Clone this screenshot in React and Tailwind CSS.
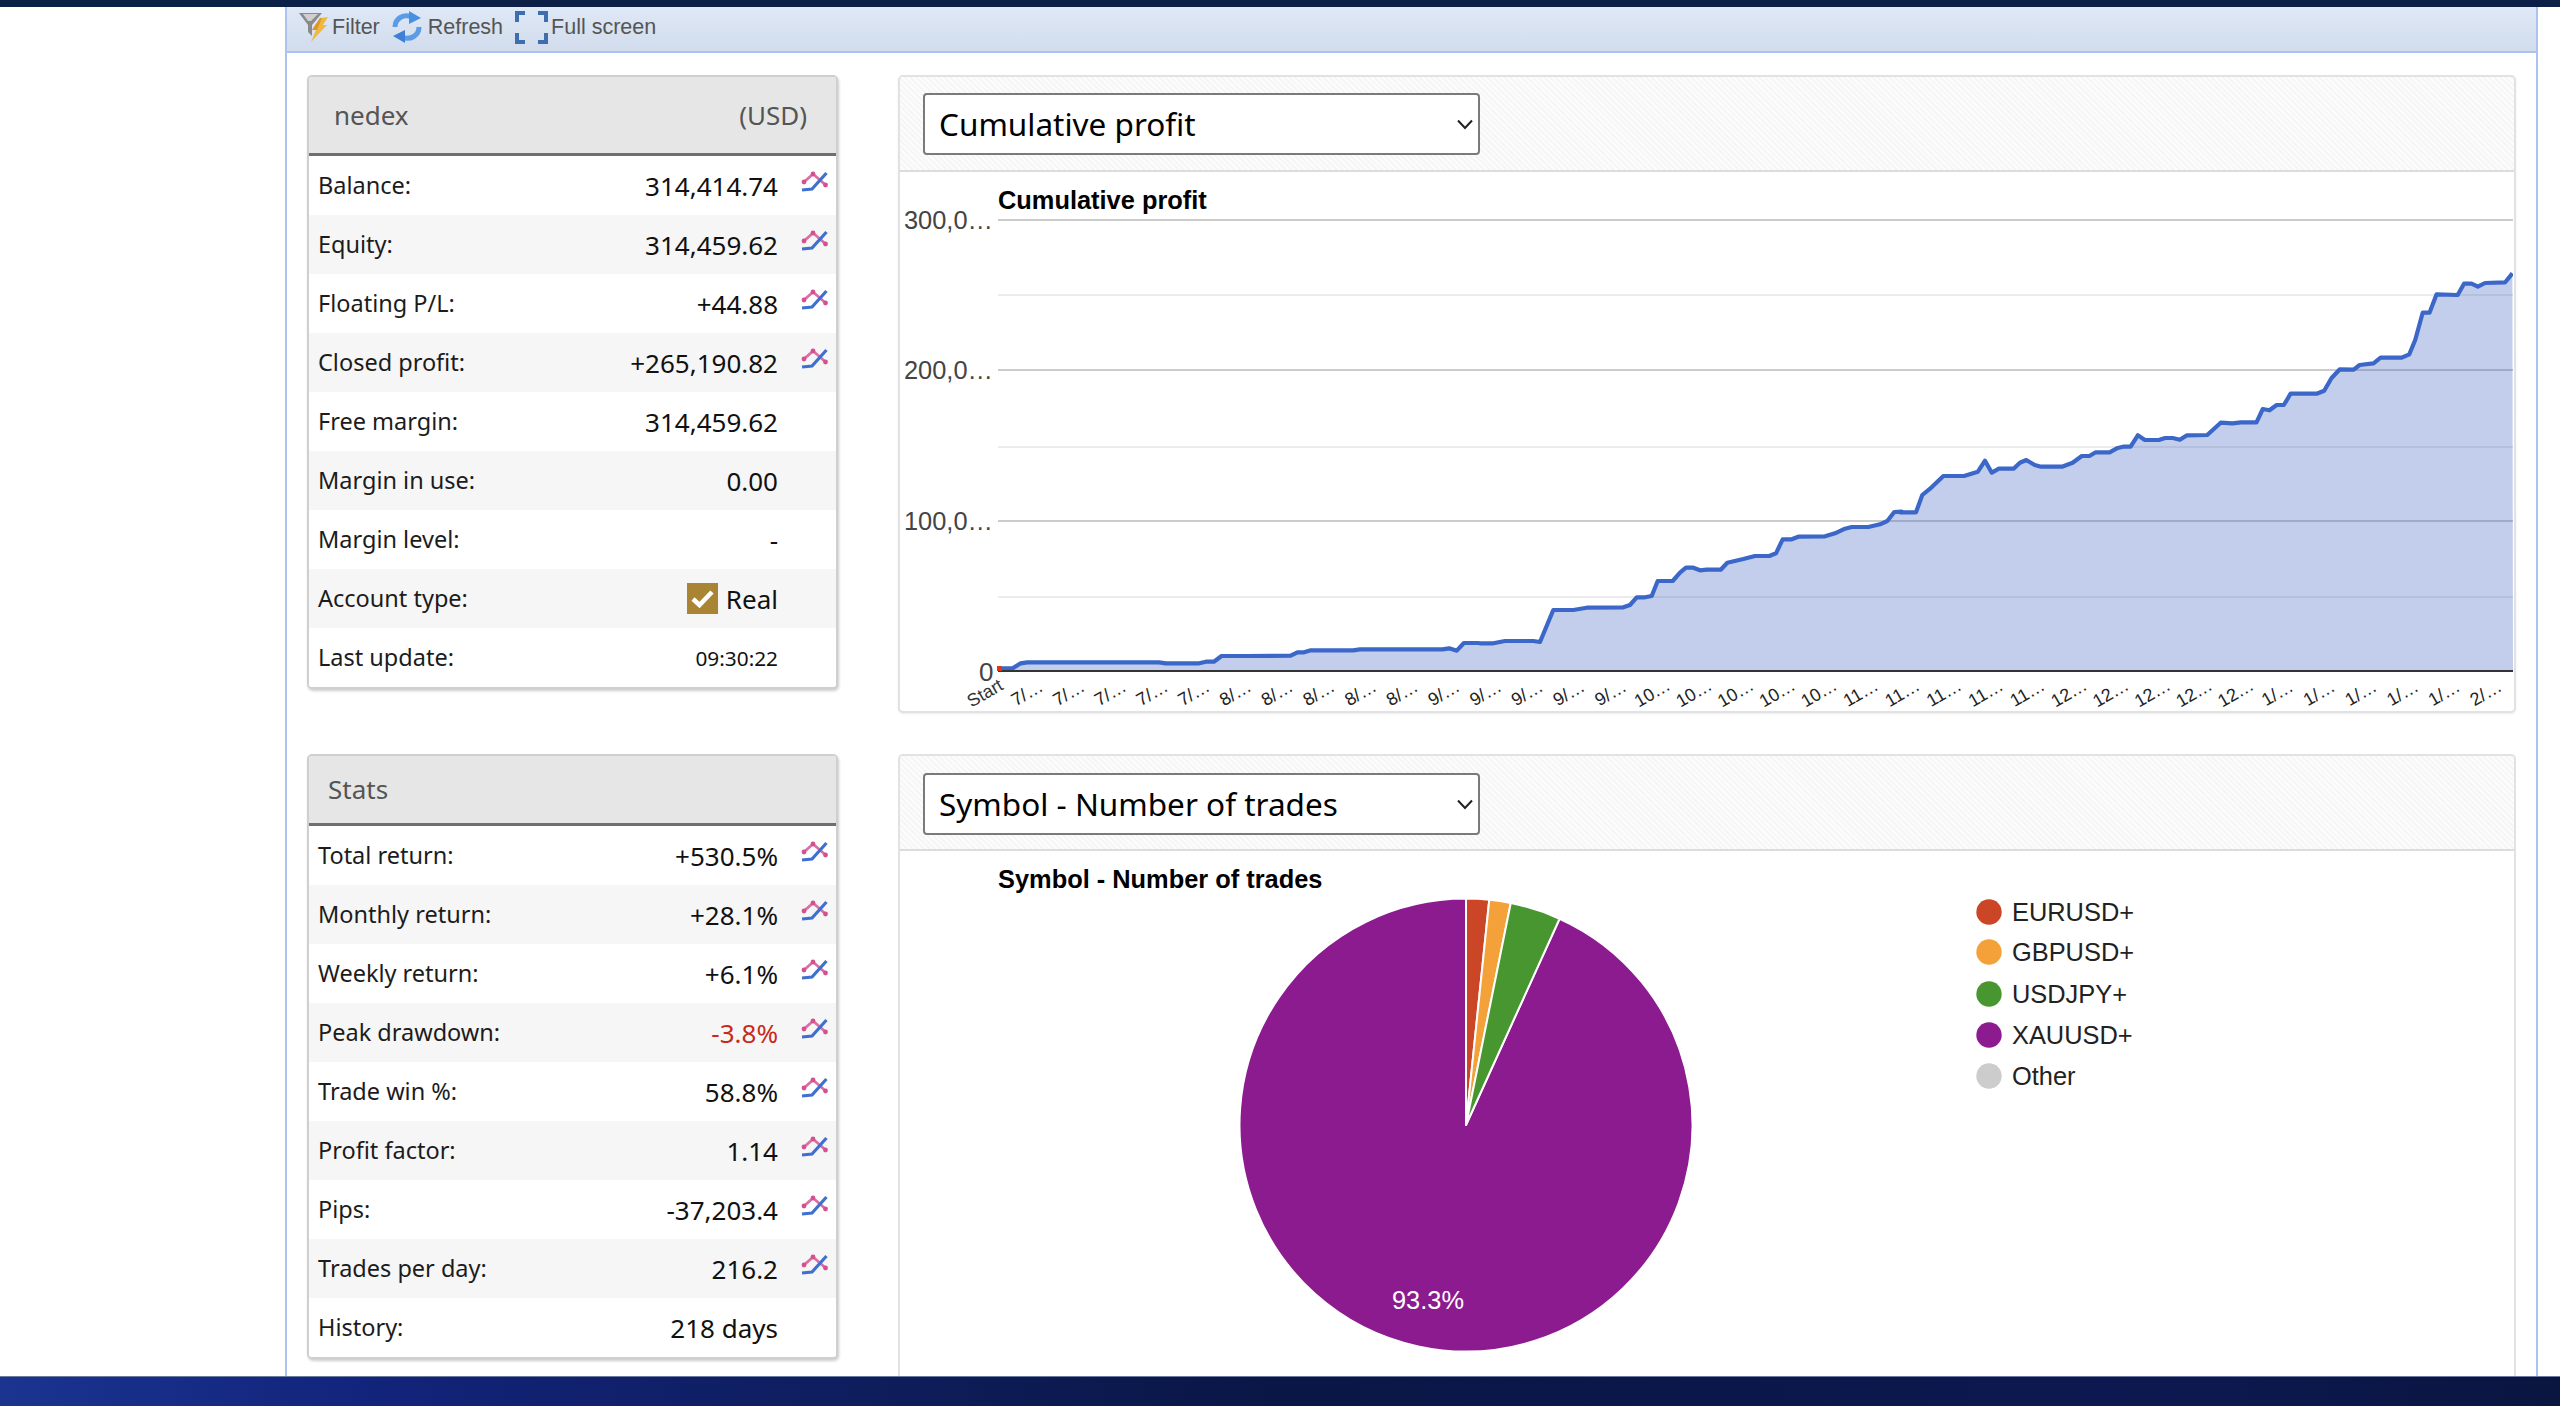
const seg1 = [[272,508],[275,505],[297,505],[315,490],[330,487],[510,487],[625,487],[640,490],[715,490],[730,485],[748,485],[765,468],[820,468],[920,467],[935,457],[950,457],[965,451],[1060,451],[1075,448],[1260,448],[1275,445],[1292,452],[1308,429],[1340,429]].map(([x,y])=>[880+x/2.24,500+y/3]);
const seg2 = [[0,670],[40,670],[75,663],[160,663],[180,666],[220,570],[280,570],[320,563],[430,562],[450,555],[470,532],[495,532],[515,528],[533,483],[578,483],[600,458],[618,443],[640,443],[660,451],[680,449],[722,449],[742,428],[790,417],[825,408],[868,408],[888,400],[908,358],[935,358],[955,350],[1035,349],[1065,340],[1095,326],[1115,321],[1165,321],[1200,313],[1222,303],[1243,276],[1265,275]].map(([x,y])=>[1480+x/3,420+y/3]);
const seg3 = [[0,817],[38,817],[53,765],[75,742],[103,708],[152,708],[185,695],[202,662],[218,698],[235,686],[270,686],[285,668],[300,660],[320,675],[335,680],[385,680],[410,668],[432,648],[450,648],[465,637],[498,637],[515,625],[530,620],[548,620],[565,586],[582,600],[615,600],[630,594],[648,594],[665,599],[682,586],[730,585],[762,548],[790,550],[810,547],[847,547],[862,507],[878,511],[895,495],[912,495],[928,461],[990,461],[1008,452],[1025,415],[1045,388],[1078,389],[1092,375],[1125,370],[1142,353],[1192,353],[1210,343],[1224,300],[1242,218],[1258,218],[1275,163],[1325,165],[1340,131],[1358,131],[1373,140],[1390,129],[1438,127],[1455,100]].map(([x,y])=>[1900+x/2.376,240+y/3]);
const line = [...seg1,...seg2,...seg3].map(([x,y])=>`${x.toFixed(1)},${y.toFixed(1)}`).join(" ");
const lastX = 2513;
const area = `${line} ${lastX},671 1001,671`;

const xLabels = [
  ...Array(5).fill("7/…"),...Array(5).fill("8/…"),...Array(5).fill("9/…"),...Array(5).fill("10…"),...Array(5).fill("11…"),...Array(5).fill("12…"),...Array(5).fill("1/…"),"2/…"];

const CX = 1466, CY = 1125, R = 226.5;
function polar(a){const t=a*Math.PI/180;return [CX+R*Math.sin(t),CY-R*Math.cos(t)];}
function slice(a,b){const [x1,y1]=polar(a);const [x2,y2]=polar(b);const large=b-a>180?1:0;return `M${CX} ${CY}L${x1} ${y1}A${R} ${R} 0 ${large} 1 ${x2} ${y2}Z`;}

function TrendIcon(){
  return (
    <svg width="27" height="21" viewBox="0 0 27 21" className="-translate-y-[4px] shrink-0" fill="none">
      <polyline points="3,11 12,3 19,9 24.5,14" stroke="#dd6ea3" strokeWidth="2.8"/>
      <circle cx="3" cy="11" r="2.4" fill="#d4508e"/>
      <circle cx="12" cy="3" r="2.4" fill="#d4508e"/>
      <circle cx="24.5" cy="14" r="2.4" fill="#d4508e"/>
      <polyline points="1,19 11,18 25.5,2" stroke="#3f6fd0" strokeWidth="3.2"/>
    </svg>
  );
}

function Row({label,value,alt,icon,valueClass="text-[26px]",children}){
  return (
    <div className={`flex h-[59px] items-center pl-[9px] pr-[8px] ${alt?"bg-[#f6f6f6]":"bg-white"}`}>
      <div className="flex-1 text-[23.5px] text-[#1c1c1c]">{label}</div>
      {children}
      <div className={`translate-y-[1px] ${valueClass}`}>{value}</div>
      <div className="ml-[23px] w-[27px] shrink-0">{icon && <TrendIcon/>}</div>
    </div>
  );
}

function Card({header,right,headerH,pl,rows}){
  return (
    <div className="overflow-hidden rounded-[5px] border-2 border-[#cfcfcf] bg-white shadow-[1px_2px_3px_rgba(0,0,0,0.2)]">
      <div className={`flex items-center justify-between border-b-[3px] border-[#6f6f6f] bg-[#e6e6e6] pr-[29px] text-[26px] text-[#555555] ${headerH} ${pl}`}>
        <span>{header}</span>
        {right && <span>{right}</span>}
      </div>
      {rows}
    </div>
  );
}

function SelectBox({value}){
  return (
    <div className="relative h-[62px] w-[557px]">
      <select defaultValue={value} className="block h-full w-full appearance-none rounded-[4px] border-2 border-[#7a7a7a] bg-white pl-[14px] text-[31.5px] text-black">
        <option>{value}</option>
      </select>
      <svg className="pointer-events-none absolute right-[6px] top-[26px]" width="18" height="11" viewBox="0 0 18 11" fill="none">
        <polyline points="2,1.5 9,9 16,1.5" stroke="#222222" strokeWidth="2"/>
      </svg>
    </div>
  );
}

function PanelHeader({value,extra=""}){
  return (
    <div className={`flex h-[95px] items-center border-b-2 border-[#dcdcdc] bg-[repeating-linear-gradient(45deg,#f6f6f6_0,#f6f6f6_2px,#fcfcfc_2px,#fcfcfc_4px)] pl-[23px] ${extra}`}>
      <SelectBox value={value}/>
    </div>
  );
}

export default function App(){
  const rows1 = [
    ["Balance:","314,414.74",true],["Equity:","314,459.62",true],["Floating P/L:","+44.88",true],["Closed profit:","+265,190.82",true],["Free margin:","314,459.62",false],["Margin in use:","0.00",false],["Margin level:","-",false]];
  const rows2 = [
    ["Total return:","+530.5%",true],["Monthly return:","+28.1%",true],["Weekly return:","+6.1%",true],["Peak drawdown:","-3.8%",true,"text-[26px] text-[#c62a1b]"],["Trade win %:","58.8%",true],["Profit factor:","1.14",true],["Pips:","-37,203.4",true],["Trades per day:","216.2",true],["History:","218 days",false]];
  return (
    <div className="flex h-[1406px] w-[2560px] flex-col overflow-hidden bg-white font-['Noto_Sans',sans-serif] text-[#111111]">
      <div className="h-[7px] shrink-0 bg-[#0c1f47]"/>
      <div className="ml-[285px] flex min-h-0 w-[2253px] flex-1 flex-col overflow-hidden border-x-2 border-[#a9c4ee]">
        <div className="flex h-[46px] shrink-0 items-center border-b-2 border-[#a9c4ee] bg-[linear-gradient(180deg,#dfe8f6,#d1dcec)] pb-[4px] pl-[10px] font-['Liberation_Sans',sans-serif] text-[21.5px] text-[#555555]">
          <svg width="32" height="32" viewBox="0 0 32 32" className="shrink-0">
            <path d="M2 2H25L15 14V25L11 21V14Z" fill="#8a8a8a"/>
            <path d="M6 3H21L14 10H11Z" fill="#cfcfcf"/>
            <path d="M23 7L31 6L26 14L30 14L14 31L19 19L15 19Z" fill="#efb93f"/>
            <path d="M23 7L25 7L20 19L19 19L15 19Z" fill="#d9962b"/>
          </svg>
          <span className="ml-[3px]">Filter</span>
          <svg width="30" height="32" viewBox="0 0 30 32" className="ml-[12px] shrink-0" fill="none">
            <path d="M3 16C3 8 11 2 21 6" stroke="#5a9de6" strokeWidth="5"/>
            <path d="M17 0L29 7L17 13Z" fill="#4a90e0"/>
            <path d="M27 16C27 24 19 30 9 26" stroke="#5a9de6" strokeWidth="5"/>
            <path d="M13 19L1 25L13 32Z" fill="#3f7fd6"/>
          </svg>
          <span className="ml-[6px]">Refresh</span>
          <svg width="33" height="33" viewBox="0 0 33 33" className="ml-[12px] shrink-0" fill="none" stroke="#3d6fb0" strokeWidth="4">
            <path d="M2 11V2H10"/>
            <path d="M23 2H31V11"/>
            <path d="M2 22V31H10"/>
            <path d="M23 31H31V22"/>
          </svg>
          <span className="ml-[3px]">Full screen</span>
        </div>
        <div className="flex min-h-0 flex-1 gap-[60px] pl-[20px] pr-[20px] pt-[22px]">
          <div className="flex w-[531px] shrink-0 flex-col gap-[65px]">
            <Card header="nedex" right="(USD)" headerH="h-[79px]" pl="pl-[25px]" rows={
              <>
                {rows1.map(([l,v,ic],i)=><Row key={l} label={l} value={v} icon={ic} alt={i%2===1}/>)}
                <Row label="Account type:" value="Real" alt>
                  <span className="mr-[8px] flex h-[31px] w-[31px] items-center justify-center bg-[#a98432]">
                    <svg width="23" height="19" viewBox="0 0 23 19" fill="none"><polyline points="2,10 8.5,16 21,3" stroke="#ffffff" strokeWidth="4.6"/></svg>
                  </span>
                </Row>
                <Row label="Last update:" value="09:30:22" valueClass="text-[20.8px]"/>
              </>
            }/>
            <Card header="Stats" headerH="h-[70px]" pl="pl-[19px]" rows={
              rows2.map(([l,v,ic,c],i)=><Row key={l} label={l} value={v} icon={ic} alt={i%2===1} valueClass={c||"text-[26px]"}/>)
            }/>
          </div>
          <div className="flex min-w-0 flex-1 flex-col gap-[41px]">
            <div className="shrink-0 overflow-hidden rounded-[5px] border-2 border-[#e2e2e2] bg-white shadow-[0_1px_2px_rgba(0,0,0,0.08)]">
              <PanelHeader value="Cumulative profit"/>
              <svg viewBox="900 172 1613 539" className="block h-[539px] w-[1613px] font-['Liberation_Sans',sans-serif]">
                <text x="998" y="209" fontSize="25.4" fontWeight="700" fill="#000000">Cumulative profit</text>
                {[220,370,521].map(y=><line key={y} x1="998" x2="2513" y1={y} y2={y} stroke="#cccccc" strokeWidth="2"/>)}
                {[295,447,597].map(y=><line key={y} x1="998" x2="2513" y1={y} y2={y} stroke="#ebebeb" strokeWidth="2"/>)}
                <polygon points={area} fill="#3a62bd" fillOpacity="0.31"/>
                <polyline points={line} fill="none" stroke="#3b67c9" strokeWidth="4.2" strokeLinejoin="round"/>
                <line x1="998" x2="2513" y1="671" y2="671" stroke="#333333" strokeWidth="2"/>
                <rect x="997" y="666" width="5" height="5" fill="#dc3912"/>
                <text x="904" y="229" fontSize="25.4" fill="#444444">300,0…</text>
                <text x="904" y="379" fontSize="25.4" fill="#444444">200,0…</text>
                <text x="904" y="530" fontSize="25.4" fill="#444444">100,0…</text>
                <text x="979" y="681" fontSize="26" fill="#444444">0</text>
                <text x="985" y="699" fontSize="18" fill="#333333" textAnchor="middle" transform="rotate(-30 985 693)">Start</text>
                {xLabels.map((t,i)=>{
                  const cx = 1027 + i*41.68;
                  return <text key={i} x={cx} y="699" fontSize="18" fill="#222222" textAnchor="middle" transform={`rotate(-30 ${cx} 693)`}>{t}</text>;
                })}
              </svg>
            </div>
            <div className="shrink-0 overflow-hidden rounded-[5px] border-2 border-[#e2e2e2] bg-white">
              <PanelHeader value="Symbol - Number of trades" extra="pt-[2px]"/>
              <svg viewBox="900 851 1613 530" className="block h-[530px] w-[1613px] font-['Liberation_Sans',sans-serif]">
                <text x="998" y="888" fontSize="25.4" fontWeight="700" fill="#000000">Symbol - Number of trades</text>
                <g stroke="#ffffff" strokeWidth="2" strokeLinejoin="round">
                  <path d={slice(24.4,360)} fill="#8c1b90"/>
                  <path d={slice(0,5.9)} fill="#cb4527"/>
                  <path d={slice(5.9,11.4)} fill="#f3a138"/>
                  <path d={slice(11.4,24.4)} fill="#47962f"/>
                </g>
                <text x="1428" y="1309" fontSize="25.4" fill="#ffffff" textAnchor="middle">93.3%</text>
                {[["EURUSD+","#cb4527",912],["GBPUSD+","#f3a138",952],["USDJPY+","#47962f",994],["XAUUSD+","#8c1b90",1035],["Other","#cccccc",1076]].map(([t,c,y])=>(
                  <g key={t}>
                    <circle cx="1989" cy={y} r="12.7" fill={c}/>
                    <text x="2012" y={y+9} fontSize="25.4" fill="#222222">{t}</text>
                  </g>
                ))}
              </svg>
            </div>
          </div>
        </div>
      </div>
      <div className="h-[30px] shrink-0 border-t border-[#6b7aa0] bg-[linear-gradient(90deg,#1a3490,#12237a_15%,#0e1d5a_35%,#0a1645_50%,#0d1850_85%,#0a1540)]"/>
    </div>
  );
}
